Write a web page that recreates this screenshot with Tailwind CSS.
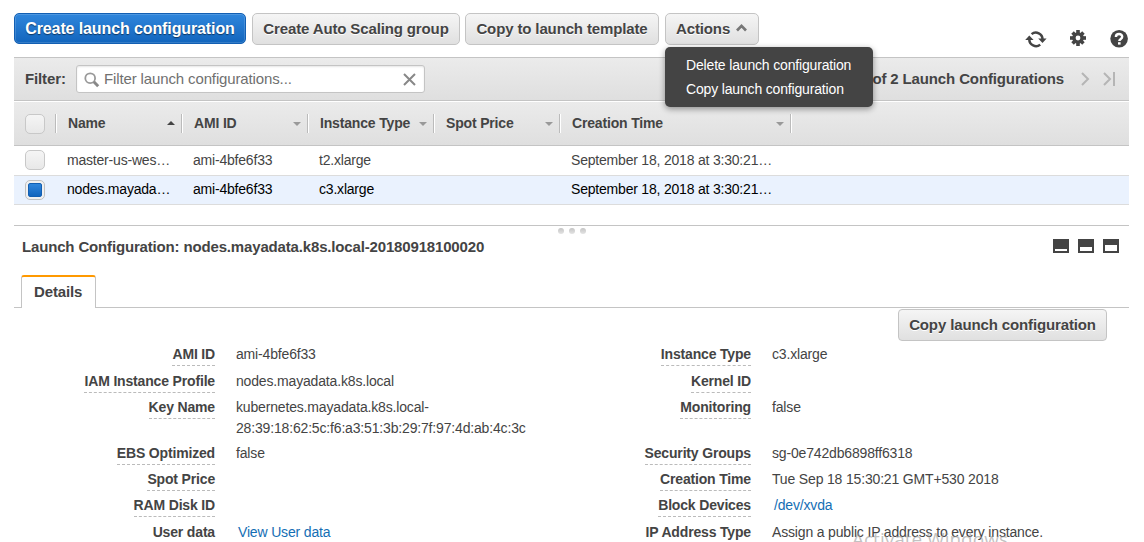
<!DOCTYPE html>
<html lang="en">
<head>
<meta charset="utf-8">
<title>Launch Configurations</title>
<script src="https://cdn.jsdelivr.net/npm/@tailwindcss/browser@4"></script>
</head>
<body class="relative h-[542px] w-[1144px] overflow-hidden bg-white font-['Liberation_Sans',Arial,sans-serif] text-[14px] leading-[21px] tracking-[-0.165px] text-[#444]">
<div class="ml-[14px] w-[1115px]">

  <header class="flex h-[57px] items-start pt-[13px]">
    <button class="h-[31px] w-[232px] rounded-[5px] border border-[#125fb3] bg-linear-to-b from-[#2f86dc] to-[#1165bd] text-[16px] font-bold leading-[29px] tracking-[-0.11px] whitespace-nowrap text-white shadow-[inset_0_0_0_1px_rgba(255,255,255,0.15)] text-shadow-[0_1px_1px_rgba(0,0,0,0.5)]">Create launch configuration</button>
    <button class="ml-[6px] h-[32px] w-[208px] rounded-[5px] border border-[#c4c4c4] bg-linear-to-b from-[#f5f5f5] to-[#e0e0e0] text-[15px] font-bold leading-[30px] tracking-[-0.13px] whitespace-nowrap text-shadow-[0_1px_0_#fff]">Create Auto Scaling group</button>
    <button class="ml-[5px] h-[32px] w-[194px] rounded-[5px] border border-[#c4c4c4] bg-linear-to-b from-[#f5f5f5] to-[#e0e0e0] text-[15px] font-bold leading-[30px] tracking-[-0.13px] whitespace-nowrap text-shadow-[0_1px_0_#fff]">Copy to launch template</button>
    <div class="relative ml-[6px]">
      <button class="flex h-[32px] w-[94px] items-center rounded-[5px] border border-[#c4c4c4] bg-linear-to-b from-[#f5f5f5] to-[#e0e0e0] pl-[10px] text-[15px] font-bold leading-[30px] tracking-[-0.13px] text-shadow-[0_1px_0_#fff]">Actions
        <svg class="-mt-[3px] ml-[6px]" width="11" height="9" viewBox="0 0 11 9"><path d="M1 7.5 5.5 2.9 10 7.5" fill="none" stroke="#777" stroke-width="2.7"/></svg>
      </button>
      <ul class="absolute top-[34px] left-0 z-10 h-[60px] w-[208px] rounded-[5px] bg-[#444] pt-[6px] pl-[21px] leading-[24px] whitespace-nowrap text-white shadow-[0_2px_6px_rgba(0,0,0,0.4)]">
        <li>Delete launch configuration</li>
        <li>Copy launch configuration</li>
      </ul>
    </div>
    <div class="mt-[17px] ml-auto flex text-[#444]">
      <svg width="22" height="18" viewBox="0 0 22 18"><g fill="none" stroke="#444" stroke-width="2.5"><path d="M6.6 4.1A6.7 6.7 0 0 1 17.5 9.5"/><path d="M15.2 14.6A6.7 6.7 0 0 1 4.3 9.5"/></g><path d="M0.2 10 4.3 5.6 8.6 10ZM13.2 8.6 17.5 13 21.6 8.6Z" fill="#444"/></svg>
      <svg class="-mt-px ml-[23px]" width="16" height="18" viewBox="0 0 16 18"><g fill="#444"><rect x="6.2" y="1" width="3.6" height="16"/><rect x="0" y="7.2" width="16" height="3.6"/><rect x="6.2" y="1.3" width="3.6" height="15.4" transform="rotate(45 8 9)"/><rect x="6.2" y="1.3" width="3.6" height="15.4" transform="rotate(-45 8 9)"/><circle cx="8" cy="9" r="5.8"/></g><circle cx="8" cy="9" r="2.4" fill="#fff"/></svg>
      <svg class="ml-[24px]" width="19" height="18" viewBox="0 0 19 18"><circle cx="9.1" cy="8.8" r="8.8" fill="#444"/><path d="M5.9 6.9C5.9 3 12.2 3.1 12.2 6.8 12.2 9 9.3 8.8 9.3 11.1" fill="none" stroke="#fff" stroke-width="2.4"/><rect x="8" y="12.2" width="2.6" height="2.4" fill="#fff"/></svg>
    </div>
  </header>

  <section class="flex h-[44px] items-center border-y border-[#c4c4c4] bg-linear-to-b from-[#ebebeb] to-[#dfdfdf] pl-[11px] text-[15px] font-bold tracking-[-0.13px]">
    <span class="w-[51px] pb-[2px]">Filter:</span>
    <div class="flex h-[28px] w-[349px] items-center rounded-[3px] border border-[#c4c4c4] bg-white pr-[8px] pl-[7px] font-normal text-[#707070] shadow-[inset_0_1px_2px_rgba(0,0,0,0.1)]">
      <svg class="mt-px" width="16" height="16" viewBox="0 0 16 16"><circle cx="6.2" cy="6.2" r="4.9" fill="none" stroke="#999" stroke-width="1.8"/><path d="m9.8 9.8 4.4 4.4" stroke="#888" stroke-width="3"/></svg>
      <span class="ml-[4px] pb-[2px]">Filter launch configurations...</span>
      <svg class="mt-px ml-auto" width="13" height="13" viewBox="0 0 13 13"><path d="m1 1 11 11M12 1 1 12" stroke="#888" stroke-width="2"/></svg>
    </div>
    <span class="ml-auto pb-[2px]">of 2 Launch Configurations</span>
    <svg class="ml-[17px]" width="9" height="14" viewBox="0 0 9 14"><path d="m1 1 6 6-6 6" fill="none" stroke="#b5b5b5" stroke-width="2"/></svg>
    <svg class="mr-[14px] ml-[13px]" width="12" height="14" viewBox="0 0 12 14"><path d="m1 1 6 6-6 6M11 0v14" fill="none" stroke="#b5b5b5" stroke-width="2"/></svg>
  </section>

  <section>
    <div class="flex h-[45px] items-center border-t border-b border-t-white border-b-[#c4c4c4] bg-linear-to-b from-[#ebebeb] to-[#dfdfdf] font-bold">
      <div class="flex h-[19px] w-[42px] items-center border-r border-[#bbb] pl-[11px] shadow-[1px_0_0_#fff]"><i class="block size-[20px] shrink-0 rounded-[5px] border border-[#c8c8c8] bg-linear-to-b from-[#f5f5f5] to-[#e8e8e8]"></i></div>
      <div class="flex h-[19px] w-[126px] items-center justify-between border-r border-[#bbb] pr-[6px] pl-[12px] shadow-[1px_0_0_#fff]">Name<svg class="-mt-[2px]" width="8" height="4"><path d="M0 4 4 0 8 4Z" fill="#444"/></svg></div>
      <div class="flex h-[19px] w-[126px] items-center justify-between border-r border-[#bbb] pr-[6px] pl-[12px] shadow-[1px_0_0_#fff]">AMI ID<svg class="mt-px" width="8" height="4"><path d="M0 0 4 4 8 0Z" fill="#999"/></svg></div>
      <div class="flex h-[19px] w-[126px] items-center justify-between border-r border-[#bbb] pr-[6px] pl-[12px] whitespace-nowrap shadow-[1px_0_0_#fff]">Instance Type<svg class="mt-px" width="8" height="4"><path d="M0 0 4 4 8 0Z" fill="#999"/></svg></div>
      <div class="flex h-[19px] w-[126px] items-center justify-between border-r border-[#bbb] pr-[6px] pl-[12px] shadow-[1px_0_0_#fff]">Spot Price<svg class="mt-px" width="8" height="4"><path d="M0 0 4 4 8 0Z" fill="#999"/></svg></div>
      <div class="flex h-[19px] w-[231px] items-center justify-between border-r border-[#bbb] pr-[6px] pl-[12px] shadow-[1px_0_0_#fff]">Creation Time<svg class="mt-px" width="8" height="4"><path d="M0 0 4 4 8 0Z" fill="#999"/></svg></div>
    </div>
    <div class="flex h-[30px] items-center border-b border-[#dcdcdc] pb-px tracking-[-0.2px] whitespace-nowrap">
      <div class="w-[53px] pl-[11px]"><i class="block size-[20px] rounded-[5px] border border-[#c8c8c8] bg-linear-to-b from-[#f5f5f5] to-[#e8e8e8]"></i></div>
      <span class="w-[126px]">master-us-wes…</span><span class="w-[126px]">ami-4bfe6f33</span><span class="w-[252px]">t2.xlarge</span><span>September 18, 2018 at 3:30:21…</span>
    </div>
    <div class="flex h-[29px] items-start border-b border-[#dcdcdc] bg-[#eaf2fe] pt-[3px] tracking-[-0.2px] whitespace-nowrap text-black">
      <div class="mt-px w-[53px] pl-[11px]"><i class="flex size-[20px] items-center justify-center rounded-[5px] border border-[#c0c0c0] bg-[#f0f0f0]"><b class="block size-[14px] rounded-[2px] border border-[#125fb3] bg-linear-to-b from-[#2f86dc] to-[#1165bd]"></b></i></div>
      <span class="w-[126px]">nodes.mayada…</span><span class="w-[126px]">ami-4bfe6f33</span><span class="w-[252px]">c3.xlarge</span><span>September 18, 2018 at 3:30:21…</span>
    </div>
  </section>

  <section class="mt-[20px] border-t border-[#c4c4c4]">
    <div class="flex h-[10px] items-center justify-center gap-[5px]">
      <i class="block size-[6px] rounded-full bg-linear-to-b from-[#c4c4c4] to-[#e4e4e4]"></i><i class="block size-[6px] rounded-full bg-linear-to-b from-[#c4c4c4] to-[#e4e4e4]"></i><i class="block size-[6px] rounded-full bg-linear-to-b from-[#c4c4c4] to-[#e4e4e4]"></i>
    </div>
    <div class="flex h-[39px] items-start pl-[8px]">
      <h2 class="text-[15px] font-bold tracking-[-0.16px]">Launch Configuration: nodes.mayadata.k8s.local-20180918100020</h2>
      <div class="mt-[3px] mr-[10px] ml-auto flex gap-[9px]">
        <svg width="16" height="14"><path fill="#444" d="M0 0h16v14H0z"/><path fill="#fff" d="M2 10h12v2H2z"/></svg>
        <svg width="16" height="14"><path fill="#444" d="M0 0h16v14H0z"/><path fill="#fff" d="M2 8h12v4H2z"/></svg>
        <svg width="16" height="14"><path fill="#444" d="M0 0h16v14H0z"/><path fill="#fff" d="M2 6h12v6H2z"/></svg>
      </div>
    </div>
    <div class="flex h-[33px] border-b border-[#c4c4c4] pl-[7px]">
      <div class="h-[33px] w-[75px] rounded-t-[3px] border-x border-t-2 border-x-[#c4c4c4] border-t-[#f90] bg-white pl-[12px] text-[15px] font-bold leading-[30px] tracking-[-0.13px]">Details</div>
    </div>
  </section>

  <section class="whitespace-nowrap">
    <div class="flex h-[36px] justify-end pt-px pr-[22px]">
      <button class="h-[32px] w-[209px] rounded-[4px] border border-[#c4c4c4] bg-linear-to-b from-[#f5f5f5] to-[#e0e0e0] text-[15px] font-bold leading-[30px] tracking-[-0.13px] text-shadow-[0_1px_0_#fff]">Copy launch configuration</button>
    </div>
    <div class="grid grid-cols-[201px_536px_1fr] grid-rows-[27px_26px_46px_26px_26px_27px_26px] [&_b]:border-b [&_b]:border-dashed [&_b]:border-[#bbb] [&_b]:pb-[3px]">
      <div class="text-right"><b>AMI ID</b></div>
      <div class="flex justify-between pl-[21px]"><span>ami-4bfe6f33</span><span><b>Instance Type</b></span></div>
      <div class="pl-[21px]">c3.xlarge</div>

      <div class="text-right"><b>IAM Instance Profile</b></div>
      <div class="flex justify-between pl-[21px]"><span>nodes.mayadata.k8s.local</span><span><b>Kernel ID</b></span></div>
      <div></div>

      <div class="text-right"><b>Key Name</b></div>
      <div class="flex justify-between pl-[21px]"><span>kubernetes.mayadata.k8s.local-<br>28:39:18:62:5c:f6:a3:51:3b:29:7f:97:4d:ab:4c:3c</span><span><b>Monitoring</b></span></div>
      <div class="pl-[21px]">false</div>

      <div class="text-right"><b>EBS Optimized</b></div>
      <div class="flex justify-between pl-[21px]"><span>false</span><span><b>Security Groups</b></span></div>
      <div class="pl-[21px]">sg-0e742db6898ff6318</div>

      <div class="text-right"><b>Spot Price</b></div>
      <div class="flex justify-between pl-[21px]"><span></span><span><b>Creation Time</b></span></div>
      <div class="pl-[21px]">Tue Sep 18 15:30:21 GMT+530 2018</div>

      <div class="text-right"><b>RAM Disk ID</b></div>
      <div class="flex justify-between pl-[21px]"><span></span><span><b>Block Devices</b></span></div>
      <div class="pl-[23px] text-[#146eb4]">/dev/xvda</div>

      <div class="text-right"><b>User data</b></div>
      <div class="flex justify-between pl-[23px]"><span class="text-[#146eb4]">View User data</span><span><b>IP Address Type</b></span></div>
      <div class="pl-[21px]">Assign a public IP address to every instance.</div>
    </div>
  </section>
</div>
<div class="absolute top-[527px] left-[852px] font-['Open_Sans',sans-serif] text-[19px] leading-[24px] tracking-normal whitespace-nowrap text-[#999]/60">Activate Windows</div>
</body>
</html>
